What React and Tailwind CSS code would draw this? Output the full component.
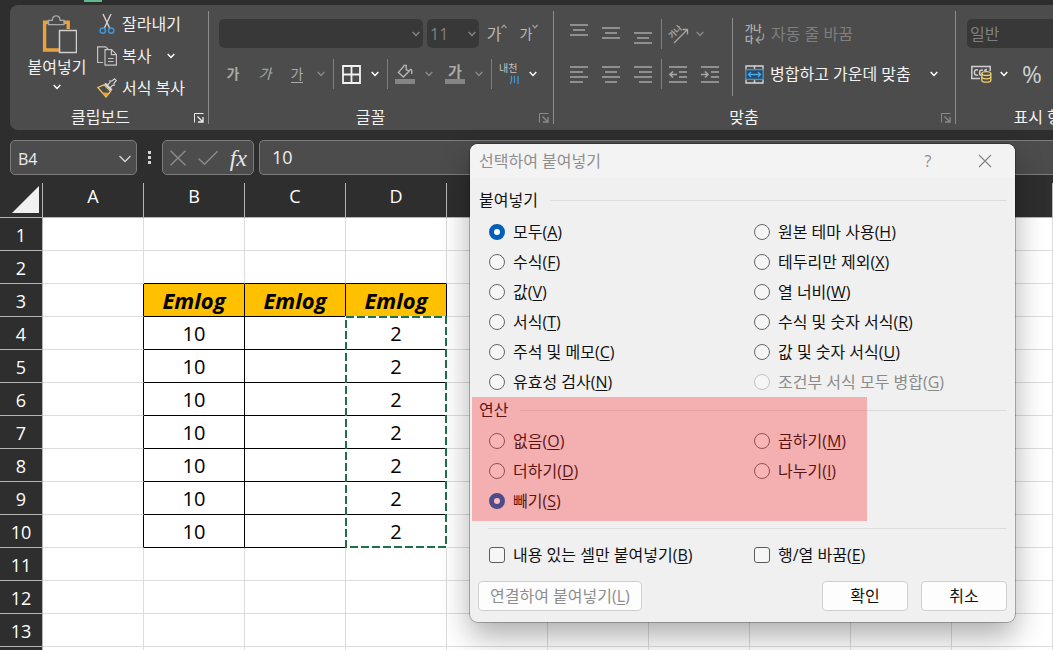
import React from "react";

const columns = ["A", "B", "C", "D", "E", "F", "G", "H", "I", "J"];
const labelledColumns = ["A", "B", "C", "D"];
const rows = [1, 2, 3, 4, 5, 6, 7, 8, 9, 10, 11, 12, 13, 14];
const tableColumns = ["B", "C", "D"];

function Chevron({ className = "text-white", wide = false }) {
  return wide ? (
    <svg width="14" height="8" viewBox="0 0 14 8" fill="none" stroke="currentColor" strokeWidth="1.3" className={className} aria-hidden="true">
      <path d="M1.5 1 7 6.5 12.5 1" />
    </svg>
  ) : (
    <svg width="8" height="6" viewBox="0 0 8 6" fill="none" stroke="currentColor" strokeWidth="1.5" className={className} aria-hidden="true">
      <path d="M0.7 1 4 4.4 7.3 1" />
    </svg>
  );
}

function IconButton({ label, children }) {
  return (
    <button type="button" aria-label={label} className="flex h-[30px] w-8 items-center justify-center">
      {children}
    </button>
  );
}

function MenuButton({ label, dim = false }) {
  return (
    <button type="button" aria-label={label} className="flex h-[30px] w-4 items-center justify-center">
      <Chevron className={dim ? "text-[#8a8a8a]" : "text-white"} />
    </button>
  );
}

function Launcher({ dim = false, label }) {
  return (
    <button type="button" aria-label={label} className={dim ? "text-[#8a8a8a]" : "text-[#ededed]"}>
      <svg width="10" height="10" viewBox="0 0 10 10" fill="none" stroke="currentColor" aria-hidden="true">
        <path d="M0.5 9.5V0.5H9.5" />
        <path d="M3.5 3.5 8.5 8.5M9 4V9H4" strokeWidth="1.3" />
      </svg>
    </button>
  );
}

function Group({ title, launcher, className = "", children }) {
  return (
    <section aria-label={title} className={"flex h-[125px] shrink-0 flex-col justify-between pb-[3px] " + className}>
      {children}
      <div className="flex h-5 items-center pr-1">
        <span className="flex-1 text-center">{title}</span>
        <span className="flex w-[17px] justify-end pt-[2px]">{launcher}</span>
      </div>
    </section>
  );
}

const GroupLine = () => <div className="my-[6px] w-px shrink-0 bg-[#8c8c8c]" />;
const SmallLine = () => <div className="ml-1 mr-px h-[30px] w-px bg-[#7d7d7d]" />;

function Lines({ segments, height = 18 }) {
  return (
    <svg width="18" height={height} viewBox={"0 0 18 " + height} stroke="#a6a6a6" strokeWidth="1.6" aria-hidden="true">
      {segments.map(([x1, x2, y]) => (
        <path key={y} d={`M${x1} ${y}H${x2}`} />
      ))}
    </svg>
  );
}

function PasteIcon() {
  return (
    <svg width="40" height="39" viewBox="0 0 40 39" fill="none" aria-hidden="true">
      <path d="M13 7.2H7.6V35H22" stroke="#e8a33d" strokeWidth="3.4" />
      <path d="M25 7.2H31.2V14" stroke="#e8a33d" strokeWidth="3.4" />
      <path d="M11.5 9.6V5.4H15.2C15.4 2.8 17 0.9 19.2 0.9S23 2.8 23.2 5.4H27V9.6Z" fill="#4c4c4c" stroke="#a9a9a9" strokeWidth="1.4" />
      <rect x="22.5" y="15.5" width="17" height="22" fill="#4c4c4c" stroke="#cfcfcf" strokeWidth="1.5" />
    </svg>
  );
}

function CutIcon() {
  return (
    <svg width="20" height="22" viewBox="0 0 20 22" fill="none" aria-hidden="true">
      <path d="M6 1 12.6 15M14 1 7.4 15" stroke="#d4d4d4" strokeWidth="1.4" />
      <circle cx="5.8" cy="17.6" r="2.7" stroke="#3f96d6" strokeWidth="1.5" />
      <circle cx="14.2" cy="17.6" r="2.7" stroke="#3f96d6" strokeWidth="1.5" />
    </svg>
  );
}

function CopyIcon() {
  return (
    <svg width="20" height="20" viewBox="0 0 20 20" fill="none" stroke="#c4c4c4" strokeWidth="1.2" aria-hidden="true">
      <path d="M6 16.5H0.6V0.8H8.5L11 3" />
      <path d="M8 3.6H14.6L19.4 8.4V19.2H8Z" />
      <path d="M14.4 3.8V8.6H19.2M11 12.5H16.6M11 15.5H16.6" />
    </svg>
  );
}

function BrushIcon() {
  return (
    <svg width="20" height="20" viewBox="0 0 20 20" fill="none" aria-hidden="true">
      <path d="M0.8 9.5 7 6.8 13.6 13.2 9 19 Z" fill="#4c4c4c" stroke="#efc56a" strokeWidth="1.3" />
      <path d="M4.5 14.5 11.5 14.8 9 19Z" fill="#f0a030" />
      <path d="M8 5.4 14.8 12.2" stroke="#dedede" strokeWidth="2" />
      <path d="M10 7.2 12.8 4.6 13 2.8 15 3 17.5 0.9 19.3 2.6 17 5.2 17.2 7.2 15.4 7.4 13 10.2" stroke="#d0d0d0" strokeWidth="1.2" />
    </svg>
  );
}

function FontGroup() {
  return (
    <Group title="글꼴" className="w-[344px]" launcher={<Launcher dim label="글꼴 설정" />}>
      <div className="flex flex-col gap-[11px] pt-[14px]">
        <div className="flex h-[29px] items-center pl-[10px]">
          <div className="relative mr-1">
            <select aria-label="글꼴" className="block h-[29px] w-[204px] appearance-none rounded-[5px] bg-[#383838] px-2 text-[#7f7f7f]">
              <option></option>
            </select>
            <Chevron className="pointer-events-none absolute right-[3px] top-3 text-[#858585]" />
          </div>
          <div className="relative mr-[2px]">
            <select aria-label="글꼴 크기" defaultValue="11" className="block h-[29px] w-[52px] appearance-none rounded-[5px] bg-[#383838] px-[3px] text-[#7f7f7f]">
              <option>11</option>
            </select>
            <Chevron className="pointer-events-none absolute right-[3px] top-3 text-[#858585]" />
          </div>
          <IconButton label="글꼴 크기 크게">
            <span className="flex items-start text-[16px] leading-5 text-[#b9b9b9]">
              가
              <svg width="6" height="5" viewBox="0 0 6 5" fill="none" stroke="#a0a0a0" aria-hidden="true"><path d="M0.5 4 3 1.2 5.5 4" strokeWidth="1.2" /></svg>
            </span>
          </IconButton>
          <IconButton label="글꼴 크기 작게">
            <span className="flex items-start text-[14px] leading-5 text-[#b9b9b9]">
              가
              <svg width="6" height="5" viewBox="0 0 6 5" fill="none" stroke="#a0a0a0" aria-hidden="true"><path d="M0.5 1 3 3.8 5.5 1" strokeWidth="1.2" /></svg>
            </span>
          </IconButton>
        </div>
        <div className="flex h-[30px] items-center pl-2 text-[14px] leading-5 text-[#a9a9a9]">
          <IconButton label="굵게"><span className="font-bold">가</span></IconButton>
          <IconButton label="기울임꼴"><span className="italic">가</span></IconButton>
          <IconButton label="밑줄"><span className="border-b border-[#a9a9a9] leading-4">가</span></IconButton>
          <MenuButton dim label="밑줄 종류" />
          <SmallLine />
          <IconButton label="테두리">
            <svg width="19" height="19" viewBox="0 0 19 19" fill="none" stroke="#f2f2f2" strokeWidth="1.8" aria-hidden="true">
              <path d="M1 1H18V18H1ZM9.5 1V18M1 9.5H18" />
            </svg>
          </IconButton>
          <MenuButton label="테두리 종류" />
          <SmallLine />
          <IconButton label="채우기 색">
            <svg width="20" height="20" viewBox="0 0 20 20" fill="none" stroke="#b5b5b5" strokeWidth="1.4" aria-hidden="true">
              <path d="M9 2 3.4 8.4 8.4 13 14 7.2M9 2V1.4H11.2V5.6L14 7.2M14 7 15.5 5.4Q17.4 5 16.6 10" />
              <rect x="0" y="15" width="20" height="5" fill="#858585" stroke="none" />
            </svg>
          </IconButton>
          <MenuButton dim label="채우기 색 선택" />
          <div className="ml-[2px]">
            <IconButton label="글꼴 색"><span className="flex h-5 w-5 justify-center border-b-[5px] border-[#858585] text-[15px] font-bold leading-[14px]">가</span></IconButton>
          </div>
          <MenuButton dim label="글꼴 색 선택" />
          <SmallLine />
          <IconButton label="윗주 필드">
            <svg width="22" height="24" viewBox="0 0 22 24" aria-hidden="true">
              <text x="1" y="10" fontSize="10" fill="#c4c4c4">내천</text>
              <path d="M13.5 14V18Q13.5 20.5 12 22M16.5 14V21M20 14V22" fill="none" stroke="#3f96d6" strokeWidth="1.3" />
            </svg>
          </IconButton>
          <MenuButton label="윗주 옵션" />
        </div>
      </div>
    </Group>
  );
}

function AlignGroup() {
  return (
    <Group title="맞춤" className="w-[401px]" launcher={<Launcher dim label="맞춤 설정" />}>
      <div className="flex">
        <div className="flex w-[178px] flex-col gap-[11px] pl-[9px] pt-[14px]">
          <div className="flex h-[29px] items-center">
            <IconButton label="위쪽 맞춤"><Lines height={28} segments={[[0, 18, 5], [3, 15, 10], [0, 18, 15]]} /></IconButton>
            <IconButton label="가운데 맞춤"><Lines height={28} segments={[[0, 18, 8], [3, 15, 13], [0, 18, 18]]} /></IconButton>
            <IconButton label="아래쪽 맞춤"><Lines height={28} segments={[[0, 18, 13], [3, 15, 18], [0, 18, 23]]} /></IconButton>
            <div className="ml-[2px] h-[30px] w-px bg-[#7d7d7d]" />
            <IconButton label="방향">
              <svg width="28" height="28" viewBox="0 0 28 28" fill="none" stroke="#a6a6a6" strokeWidth="1.3" aria-hidden="true">
                <text transform="translate(8 19) rotate(-45)" fontSize="8" fontWeight="700" fill="#a6a6a6" stroke="none">가나</text>
                <path d="M10 23 23 10M18.5 9.5H23.5V14.5" />
              </svg>
            </IconButton>
            <button type="button" aria-label="방향 선택" className="flex h-[30px] w-3 items-center justify-center"><Chevron className="text-[#8a8a8a]" /></button>
          </div>
          <div className="flex h-[30px] items-center">
            <IconButton label="왼쪽 맞춤"><Lines segments={[[0, 18, 2], [0, 13, 7], [0, 18, 12], [0, 13, 17]]} /></IconButton>
            <IconButton label="가로 가운데 맞춤"><Lines segments={[[0, 18, 2], [3, 15, 7], [0, 18, 12], [3, 15, 17]]} /></IconButton>
            <IconButton label="오른쪽 맞춤"><Lines segments={[[0, 18, 2], [5, 18, 7], [0, 18, 12], [5, 18, 17]]} /></IconButton>
            <div className="ml-[2px] h-[30px] w-px bg-[#7d7d7d]" />
            <IconButton label="내어쓰기">
              <svg width="18" height="18" viewBox="0 0 18 18" fill="none" stroke="#a6a6a6" strokeWidth="1.6" aria-hidden="true">
                <path d="M0 2H18M10 7H18M10 12H18M0 17H18M1 9.5H8M4 6.5 1 9.5 4 12.5" />
              </svg>
            </IconButton>
            <IconButton label="들여쓰기">
              <svg width="18" height="18" viewBox="0 0 18 18" fill="none" stroke="#a6a6a6" strokeWidth="1.6" aria-hidden="true">
                <path d="M0 2H18M10 7H18M10 12H18M0 17H18M0 9.5H7M4 6.5 7 9.5 4 12.5" />
              </svg>
            </IconButton>
          </div>
        </div>
        <div className="mt-[13px] h-[78px] w-px bg-[#8c8c8c]" />
        <div className="flex flex-1 flex-col gap-[11px] pl-3 pt-[14px]">
          <button type="button" className="flex h-[29px] items-center gap-[6px] self-start text-[#7f7f7f]">
            <svg width="20" height="22" viewBox="0 0 20 22" fill="none" aria-hidden="true">
              <text x="0" y="9" fontSize="9" fontWeight="700" fill="#b0b0b0">가나</text>
              <text x="0" y="20" fontSize="9" fontWeight="700" fill="#b0b0b0">다</text>
              <path d="M18.5 10.5V13.5Q18.5 17 15 17H11.5M14.5 13.5 11.2 17 14.5 20.5" stroke="#9a9a9a" strokeWidth="1.3" />
            </svg>
            자동 줄 바꿈
          </button>
          <div className="flex h-[30px] items-center">
            <button type="button" className="flex items-center gap-[6px]">
              <svg width="19" height="19" viewBox="0 0 19 19" fill="none" aria-hidden="true">
                <path d="M1 5V1H18V5M9.5 1V4M1 14V18H18V14M9.5 15V18" stroke="#d5d5d5" strokeWidth="1.4" />
                <rect x="0.8" y="4.6" width="17.4" height="9.8" fill="#2b4a61" stroke="#3f96d6" strokeWidth="1.4" />
                <path d="M3.4 9.5H15.6M6 7 3.4 9.5 6 12M13 7 15.6 9.5 13 12" stroke="#4da6e8" strokeWidth="1.3" />
              </svg>
              병합하고 가운데 맞춤
            </button>
            <span className="ml-[15px]"><MenuButton label="병합 옵션" /></span>
          </div>
        </div>
      </div>
    </Group>
  );
}

function Ribbon() {
  return (
    <div className="ml-[10px] flex overflow-hidden rounded-l-[8px] bg-[#4c4c4c] leading-5 text-[#f2f2f2]">
      <Group title="클립보드" className="w-[198px] pl-1" launcher={<Launcher label="클립보드 설정" />}>
        <div className="flex pl-[13px] pt-[3px]">
          <button type="button" className="flex w-[60px] flex-col items-center pt-[7px]">
            <PasteIcon />
            <span className="mt-[3px]">붙여넣기</span>
            <Chevron className="mt-[7px] text-white" />
          </button>
          <div className="ml-[10px] flex flex-col">
            <button type="button" className="flex h-8 items-center gap-[5px]"><CutIcon />잘라내기</button>
            <div className="flex h-8 items-center">
              <button type="button" className="flex items-center gap-[5px]"><CopyIcon />복사</button>
              <span className="ml-3"><MenuButton label="복사 옵션" /></span>
            </div>
            <button type="button" className="flex h-8 items-center gap-[5px]"><BrushIcon />서식 복사</button>
          </div>
        </div>
      </Group>
      <GroupLine />
      <FontGroup />
      <GroupLine />
      <AlignGroup />
      <GroupLine />
      <Group title="표시 형식" className="w-[199px]" launcher={<Launcher dim label="표시 형식 설정" />}>
        <div className="flex flex-col gap-[11px] pl-[11px] pt-[14px]">
          <select aria-label="표시 형식" className="block h-[29px] w-[160px] appearance-none rounded-[5px] bg-[#383838] px-[3px] text-[#7f7f7f]">
            <option>일반</option>
          </select>
          <div className="flex h-[30px] items-center pl-1">
            <button type="button" aria-label="회계 표시 형식">
              <svg width="21" height="18" viewBox="0 0 21 18" fill="none" aria-hidden="true">
                <path d="M9 13.4H0.8V1.6H19.2V6" stroke="#cfcfcf" strokeWidth="1.5" />
                <path d="M7 5Q3.4 4 3.4 7.5T7 10M12 5Q8.6 4.6 8.6 7.5T10 10M13.5 6Q14 4.4 16 4.6" stroke="#cfcfcf" strokeWidth="1.6" />
                <path d="M10.8 8.6V15.2C10.8 17.8 19.8 17.8 19.8 15.2V8.6" fill="#4c4c4c" stroke="#f1cf6d" strokeWidth="1.3" />
                <ellipse cx="15.3" cy="8.6" rx="4.5" ry="1.9" fill="#4c4c4c" stroke="#f1cf6d" strokeWidth="1.3" />
                <path d="M10.8 12C10.8 14.4 19.8 14.4 19.8 12" stroke="#f1cf6d" strokeWidth="1.3" />
              </svg>
            </button>
            <span className="ml-1"><MenuButton label="회계 옵션" /></span>
            <button type="button" className="ml-[10px] text-[24px] leading-[30px] text-[#cfcfcf]">%</button>
          </div>
        </div>
      </Group>
    </div>
  );
}

function FormulaBar() {
  return (
    <div className="mt-[10px] flex h-[35px] items-stretch pl-[10px] text-[#ededed]">
      <div className="relative">
        <input aria-label="이름 상자" defaultValue="B4" className="h-full w-[127px] rounded-[5px] border border-[#7c7c7c] bg-[#4c4c4c] px-[7px] pt-[3px]" />
        <Chevron wide className="pointer-events-none absolute right-[5px] top-[15px] text-[#d6d6d6]" />
      </div>
      <div className="flex w-[25px] flex-col items-center justify-center gap-[2px]">
        <span className="size-[3px] bg-[#d6d6d6]" />
        <span className="size-[3px] bg-[#d6d6d6]" />
        <span className="size-[3px] bg-[#d6d6d6]" />
      </div>
      <div className="flex w-[92px] items-center justify-between rounded-[5px] border border-[#7c7c7c] bg-[#4c4c4c] px-[6px]">
        <button type="button" aria-label="취소">
          <svg width="18" height="16" viewBox="0 0 18 16" fill="none" stroke="#8c8c8c" strokeWidth="1.4" aria-hidden="true"><path d="M1.5 0.7 16.5 15.3M16.5 0.7 1.5 15.3" /></svg>
        </button>
        <button type="button" aria-label="입력">
          <svg width="22" height="16" viewBox="0 0 22 16" fill="none" stroke="#8c8c8c" strokeWidth="1.4" aria-hidden="true"><path d="M1.5 8.5 7.5 14.3 20.5 1.2" /></svg>
        </button>
        <button type="button" aria-label="함수 삽입" className="font-['Liberation_Serif',serif] text-[24px] italic leading-6 text-[#e6e6e6]">fx</button>
      </div>
      <input aria-label="수식 입력줄" defaultValue="10" className="ml-[5px] min-w-0 flex-1 rounded-l-[5px] border border-r-0 border-[#7c7c7c] bg-[#4c4c4c] px-3 text-[18px]" />
    </div>
  );
}

function cellClass(col, row) {
  const inTable = tableColumns.includes(col);
  const right = (inTable || col === "A") && row >= 3 && row <= 10 ? "border-r-black" : "border-r-[#dcdcdc]";
  const bottom = inTable && row >= 2 && row <= 10 ? "border-b-black" : "border-b-[#dcdcdc]";
  const fill = inTable && row === 3 ? "bg-[#ffc000] text-[22px] font-bold italic" : "bg-white pt-[2px] text-[20px]";
  return `h-[33px] border-r border-b text-center leading-6 ${right} ${bottom} ${fill}`;
}

function cellValue(col, row) {
  if (row === 3 && tableColumns.includes(col)) return "Emlog";
  if (row >= 4 && row <= 10) return col === "B" ? "10" : col === "D" ? "2" : "";
  return "";
}

function CopyMarquee() {
  return (
    <svg className="pointer-events-none absolute -left-[1px] -top-[1px]" width="103" height="233" viewBox="0 0 103 233" fill="none" aria-hidden="true">
      <rect x="1" y="1" width="100" height="230" stroke="#ffffff" strokeWidth="2" />
      <rect x="1" y="1" width="100" height="230" stroke="#1e7145" strokeWidth="2" strokeDasharray="8 3" />
    </svg>
  );
}

function Sheet() {
  return (
    <table className="mt-2 w-full table-fixed border-separate border-spacing-0 text-black">
      <colgroup>
        <col className="w-[43px]" />
        {columns.map((c) => <col key={c} className="w-[101px]" />)}
        <col />
      </colgroup>
      <thead>
        <tr>
          <th aria-label="모두 선택" className="h-[35px] border-r border-b border-[#b5b5b5] p-0">
            <svg className="ml-3" width="28" height="28" viewBox="0 0 28 28" aria-hidden="true"><path d="M27 0V27H0Z" fill="#f0f0f0" /></svg>
          </th>
          {columns.map((c) => (
            <th key={c} scope="col" aria-label={c} className="h-[35px] border-r border-b border-[#b5b5b5] p-0 pb-2 text-[18px] font-normal leading-6 text-white">
              {labelledColumns.includes(c) ? c : null}
            </th>
          ))}
          <td className="border-b border-[#b5b5b5] p-0" />
        </tr>
      </thead>
      <tbody>
        {rows.map((r) => (
          <tr key={r}>
            <th scope="row" className="h-[33px] border-r border-b border-[#b5b5b5] bg-[#2e2e2e] p-0 pt-[2px] text-[18px] font-normal leading-6 text-white">{r}</th>
            {columns.map((c) =>
              c === "D" && r === 4 ? (
                <td key={c} className={"relative z-10 " + cellClass(c, r)}>
                  {cellValue(c, r)}
                  <CopyMarquee />
                </td>
              ) : (
                <td key={c} className={cellClass(c, r)}>{cellValue(c, r)}</td>
              )
            )}
            <td className="border-b border-[#dcdcdc] bg-white p-0" />
          </tr>
        ))}
      </tbody>
    </table>
  );
}

function Caption({ text, hotkey }) {
  return (
    <span>
      {text}(<span className="underline underline-offset-2">{hotkey}</span>)
    </span>
  );
}

function Radio({ name, text, hotkey, checked, disabled }) {
  return (
    <label className={"flex h-[30px] items-center gap-2 " + (disabled ? "text-[#8b8b8b]" : "")}>
      <input
        type="radio"
        name={name}
        defaultChecked={checked}
        disabled={disabled}
        className="size-4 appearance-none rounded-full border border-[#666666] bg-[#f6f6f6] checked:border-[5px] checked:border-[#005fb8] checked:bg-white disabled:border-[#c3c3c3]"
      />
      <Caption text={text} hotkey={hotkey} />
    </label>
  );
}

function Check({ text, hotkey }) {
  return (
    <label className="flex h-[30px] items-center gap-2">
      <input type="checkbox" className="size-4 appearance-none rounded-[3px] border border-[#5c5c5c] bg-[#f6f6f6] checked:bg-[#005fb8]" />
      <Caption text={text} hotkey={hotkey} />
    </label>
  );
}

function SectionTitle({ id, children }) {
  return (
    <div className="flex h-5 items-center gap-3 pl-px">
      <h3 id={id}>{children}</h3>
      <div className="h-px flex-1 bg-[#dcdcdc]" />
    </div>
  );
}

const pasteLeft = [["모두", "A", true], ["수식", "F"], ["값", "V"], ["서식", "T"], ["주석 및 메모", "C"], ["유효성 검사", "N"]];
const pasteRight = [["원본 테마 사용", "H"], ["테두리만 제외", "X"], ["열 너비", "W"], ["수식 및 숫자 서식", "R"], ["값 및 숫자 서식", "U"], ["조건부 서식 모두 병합", "G", false, true]];
const opLeft = [["없음", "O"], ["더하기", "D"], ["빼기", "S", true]];
const opRight = [["곱하기", "M"], ["나누기", "I"]];

function RadioColumns({ name, left, right }) {
  const render = ([text, hotkey, checked, disabled]) => (
    <Radio key={hotkey} name={name} text={text} hotkey={hotkey} checked={checked} disabled={disabled} />
  );
  return (
    <div className="flex pl-[10px]">
      <div className="w-[265px]">{left.map(render)}</div>
      <div className="flex-1">{right.map(render)}</div>
    </div>
  );
}

function PasteDialog() {
  const button = "h-[30px] rounded-[4px] border border-[#cfcfcf] bg-[#fdfdfd] text-center";
  return (
    <div
      role="dialog"
      aria-labelledby="dialog-title"
      className="absolute left-[470px] top-[144px] z-20 w-[545px] rounded-[8px] bg-[#f0f0f0] pb-[11px] leading-5 text-[#111111] shadow-[0_0_0_1px_rgba(0,0,0,0.25),0_14px_30px_rgba(0,0,0,0.32)]"
    >
      <header className="flex h-[34px] items-center rounded-t-[8px] bg-[#f3f3f3] pl-[9px] pr-[23px] text-[#8e8e8e]">
        <h2 id="dialog-title" className="flex-1">선택하여 붙여넣기</h2>
        <button type="button" className="mr-[46px] w-2">?</button>
        <button type="button" aria-label="닫기">
          <svg width="14" height="14" viewBox="0 0 14 14" fill="none" stroke="#858585" strokeWidth="1.2" aria-hidden="true"><path d="M1 1 13 13M13 1 1 13" /></svg>
        </button>
      </header>
      <div className="px-2">
        <div role="radiogroup" aria-labelledby="paste-title" className="pt-3">
          <SectionTitle id="paste-title">붙여넣기</SectionTitle>
          <div className="pl-px pt-[7px]"><RadioColumns name="paste" left={pasteLeft} right={pasteRight} /></div>
        </div>
        <div role="radiogroup" aria-labelledby="op-title" className="relative pt-[3px]">
          <SectionTitle id="op-title">연산</SectionTitle>
          <div className="pl-px pt-[6px]"><RadioColumns name="operation" left={opLeft} right={opRight} /></div>
          <div className="pointer-events-none absolute -left-[6px] top-0 h-[124px] w-[395px] bg-[#ff1e21]/30" />
        </div>
        <div className="ml-[10px] mt-3 h-px bg-[#dcdcdc]" />
        <div className="flex pl-[11px] pt-[11px]">
          <div className="w-[265px]"><Check text="내용 있는 셀만 붙여넣기" hotkey="B" /></div>
          <Check text="행/열 바꿈" hotkey="E" />
        </div>
        <div className="mt-[11px] flex gap-[13px]">
          <button type="button" className={button + " mr-auto px-[11px] text-[#8e8e8e]"}><Caption text="연결하여 붙여넣기" hotkey="L" /></button>
          <button type="button" className={button + " w-[86px]"}>확인</button>
          <button type="button" className={button + " w-[86px]"}>취소</button>
        </div>
      </div>
    </div>
  );
}

export default function App() {
  return (
    <main className="relative h-screen overflow-hidden bg-[#2e2e2e] pt-[5px] font-['Open_Sans','Noto_Sans_CJK_KR',sans-serif] text-[16px]">
      <div className="absolute left-[84px] top-0 h-[2px] w-[18px] bg-[#5fb98a]" />
      <Ribbon />
      <FormulaBar />
      <Sheet />
      <PasteDialog />
    </main>
  );
}
